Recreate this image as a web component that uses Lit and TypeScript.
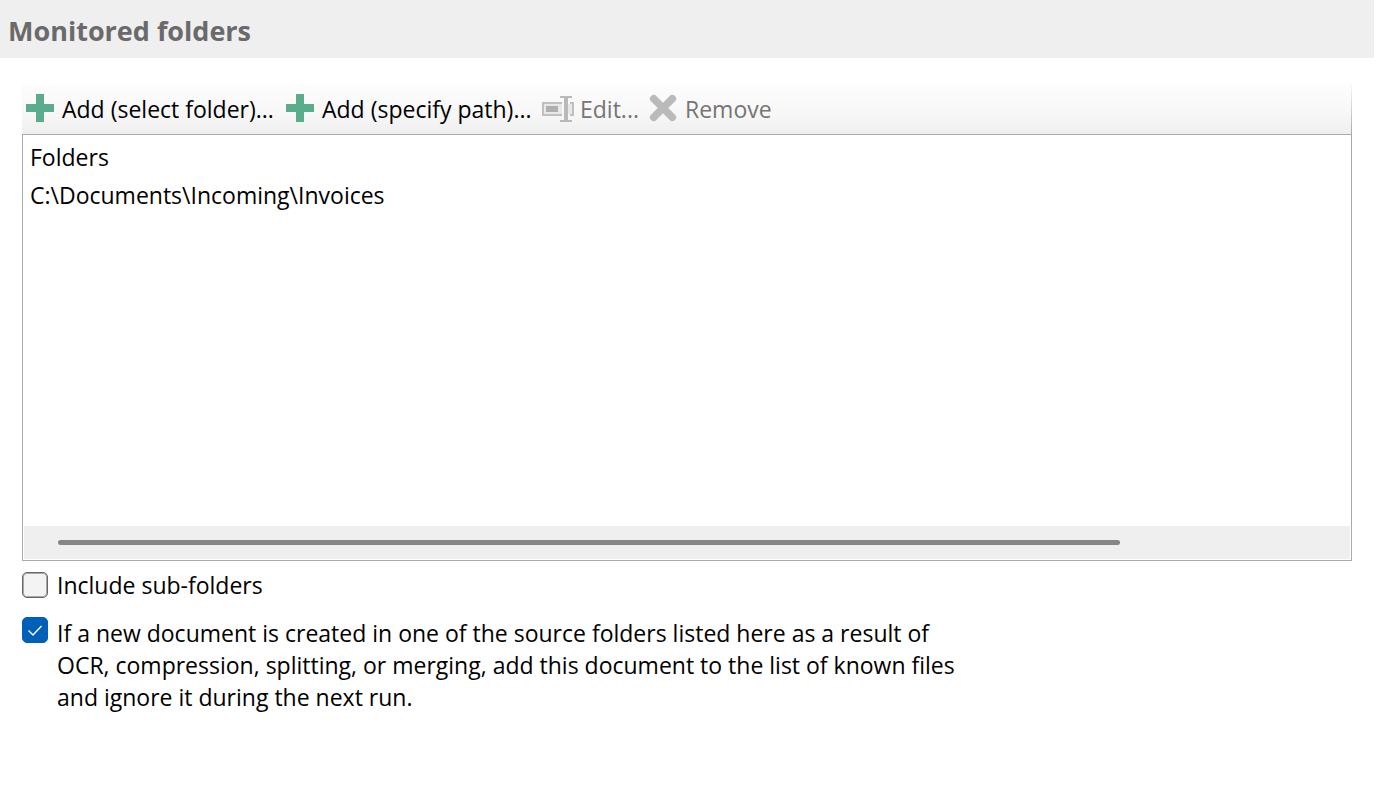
import { LitElement, html, css, svg } from "lit";
import { customElement, state } from "lit/decorators.js";

const plusIcon = svg`<svg width="28" height="28" viewBox="0 0 28 28" aria-hidden="true">
  <path fill="#59ad8c" d="M10 0h8v10h10v8H18v10h-8V18H0v-8h10z" />
</svg>`;

const editIcon = svg`<svg width="32" height="28" viewBox="0 -2 32 28" aria-hidden="true" shape-rendering="crispEdges">
  <path fill="#e8e8e8" d="M2 8h18v10H2zM26 8h4v10h-4z" />
  <path fill="#bfbfbf" d="M0 6h20v2H2v10h18v2H0zM28 6h4v14h-4v-2h2V8h-2z" />
  <path fill="#afafaf" d="M4 10h12v6H4z" />
  <path fill="#b9b9b9" d="M18 0h12v2h-4v22h4v2H18v-2h4V2h-4z" />
</svg>`;

const removeIcon = svg`<svg width="28" height="28" viewBox="0 0 28 28" aria-hidden="true">
  <path fill="none" stroke="#dadada" stroke-width="8" d="M3 3l22 22M25 3L3 25" />
  <path fill="none" stroke="#bababa" stroke-width="7" stroke-linecap="round" d="M4.500 4.500l19 19M23.500 4.500l-19 19" />
</svg>`;

@customElement("app-root")
export class AppRoot extends LitElement {
  static styles = css`
    :host {
      display: block;
      min-height: 100vh;
      background: #fff;
      color: #000;
      font-family: "Segoe UI", "Open Sans", sans-serif;
      font-size: 23px;
      line-height: 32px;
    }
    .header {
      margin-right: 8px;
      padding: 13px 8px 9px;
      background: #efefef;
    }
    .title {
      margin: 0;
      font-size: 27px;
      line-height: 36px;
      font-weight: 700;
      color: #6a6a6a;
    }
    .content {
      padding: 26px 30px 0 22px;
    }
    .toolbar {
      display: grid;
      grid-template-columns: 260px 256px 107px auto;
      justify-content: start;
      box-sizing: border-box;
      height: 50px;
      padding: 0 4px;
      border-right: 1px solid;
      border-image: linear-gradient(#fcfcfc, #a8a8a8) 1;
      background: linear-gradient(#fdfdfd, #f7f7f7 60%, #efefef);
    }
    .tool {
      display: flex;
      align-items: center;
      gap: 8px;
      padding: 0;
      border: 0;
      background: none;
      color: inherit;
      font: inherit;
      white-space: nowrap;
    }
    .tool svg {
      flex: none;
      margin-bottom: 2px;
    }
    .tool:disabled {
      color: #757575;
    }
    .tool.edit {
      gap: 6px;
    }
    .list {
      display: flex;
      flex-direction: column;
      justify-content: space-between;
      box-sizing: border-box;
      min-height: 427px;
      padding: 3px 1px 1px;
      border: 1px solid #a9a9af;
    }
    .folders {
      width: 100%;
      border-collapse: collapse;
      text-align: left;
    }
    .folders th,
    .folders td {
      height: 38px;
      padding: 0 6px;
      font-weight: 400;
    }
    .scrollbar {
      display: flex;
      align-items: center;
      height: 33px;
      padding: 0 34px;
      background: #efefef;
    }
    .thumb {
      height: 5px;
      border-radius: 3px;
      background: #868686;
    }
    .options {
      display: grid;
      gap: 16px;
      padding-top: 8px;
    }
    .option {
      display: grid;
      grid-template-columns: 26px minmax(0, 910px);
      gap: 9px;
      align-items: start;
    }
    .option.single {
      align-items: center;
    }
    .check {
      appearance: none;
      box-sizing: border-box;
      width: 26px;
      height: 26px;
      margin: 0;
      border: 1px solid #666;
      border-radius: 5px;
      background: #f3f3f3;
      box-shadow: inset 0 0 0 1px #a8a8a8;
    }
    .check:checked {
      border-color: #005fb8;
      background: #005fb8;
      box-shadow: none;
    }
    .box {
      display: grid;
    }
    .box > * {
      grid-area: 1 / 1;
    }
    .mark {
      width: 26px;
      height: 26px;
      pointer-events: none;
    }
  `;

  @state() private subFolders = false;
  @state() private ignoreNew = true;
  @state() private folders = ["C:\\Documents\\Incoming\\Invoices"];

  private option(id: string, kind: string, checked: boolean, label: string, toggle: () => void) {
    return html`<div class="option ${kind}">
      <span class="box">
        <input class="check" type="checkbox" id=${id} .checked=${checked} @change=${toggle} />
        ${checked
          ? svg`<svg class="mark" viewBox="0 0 26 26" aria-hidden="true"><path d="M6.500 13.500l4.500 4.500 8.500-9" fill="none" stroke="#fff" stroke-width="1.400" /></svg>`
          : ""}
      </span>
      <label for=${id}>${label}</label>
    </div>`;
  }

  render() {
    return html`
      <header class="header"><h1 class="title">Monitored folders</h1></header>
      <main class="content">
        <div class="toolbar" role="toolbar" aria-label="Folder actions">
          <button class="tool">${plusIcon}<span>Add (select folder)...</span></button>
          <button class="tool">${plusIcon}<span>Add (specify path)...</span></button>
          <button class="tool edit" disabled>${editIcon}<span>Edit...</span></button>
          <button class="tool" disabled>${removeIcon}<span>Remove</span></button>
        </div>
        <div class="list">
          <table class="folders">
            <thead><tr><th scope="col">Folders</th></tr></thead>
            <tbody>${this.folders.map((f) => html`<tr><td>${f}</td></tr>`)}</tbody>
          </table>
          <div class="scrollbar"><div class="thumb" style="width:${(1062 / 1258) * 100}%"></div></div>
        </div>
        <div class="options">
          ${this.option("sub", "single", this.subFolders, "Include sub-folders", () => (this.subFolders = !this.subFolders))}
          ${this.option(
            "ignore",
            "",
            this.ignoreNew,
            "If a new document is created in one of the source folders listed here as a result of OCR, compression, splitting, or merging, add this document to the list of known files and ignore it during the next run.",
            () => (this.ignoreNew = !this.ignoreNew)
          )}
        </div>
      </main>
    `;
  }
}
